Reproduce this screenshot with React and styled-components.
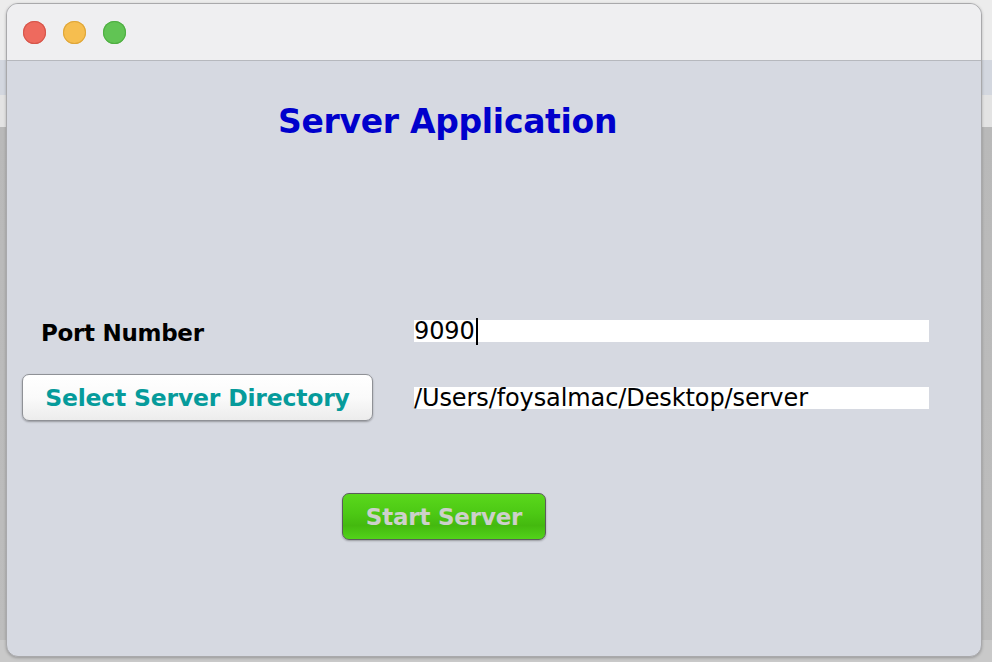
import React from "react";
import styled, { createGlobalStyle } from "styled-components";

const Global = createGlobalStyle`
  html, body { margin: 0; padding: 0; height: 100%; }
  body {
    width: 992px;
    height: 662px;
    overflow: hidden;
    font-family: "DejaVu Sans", "Liberation Sans", sans-serif;
    background: linear-gradient(
      to bottom,
      #ececec 0px, #ececec 60px,
      #d3d7df 60px, #d3d7df 95px,
      #e3e3e3 95px, #e3e3e3 127px,
      #b9b9b9 127px, #bdbdbd 640px,
      #c9c9c9 640px
    );
  }
  #root { height: 100%; }
`;

const Stage = styled.div`
  height: 100%;
  padding: 3px 10px 5px 6px;
  box-sizing: border-box;
  display: flex;
`;

const Window = styled.div`
  flex: 1;
  display: flex;
  flex-direction: column;
  border-radius: 12px;
  overflow: hidden;
  background: #d6d9e1;
  border: 1px solid #a9a9ab;
  box-shadow: 0 1px 3px rgba(0, 0, 0, 0.25);
`;

const TitleBar = styled.div`
  height: 56px;
  flex: none;
  background: #efeff1;
  border-bottom: 1px solid #b6b8bd;
  display: flex;
  align-items: center;
  gap: 17px;
  padding: 0 0 0 16px;
`;

const Light = styled.span`
  width: 23px;
  height: 23px;
  border-radius: 50%;
  background: ${(p) => p.$c};
  box-shadow: inset 0 0 0 1px ${(p) => p.$b};
`;

const Content = styled.div`
  flex: 1;
  display: flex;
  flex-direction: column;
`;

const Title = styled.h1`
  margin: 40px 0 0 271px;
  font-size: 33px;
  font-weight: bold;
  color: #0000cc;
  line-height: 42px;
  letter-spacing: -0.3px;
`;

const Form = styled.div`
  margin-top: 175px;
  display: grid;
  grid-template-columns: 392px 515px;
  row-gap: 30px;
  padding-left: 15px;
  align-items: center;
`;

const Label = styled.div`
  padding-left: 19px;
  font-size: 23px;
  font-weight: bold;
  color: #000;
  letter-spacing: -0.3px;
  position: relative;
  top: 2px;
`;

const Field = styled.div`
  height: 22px;
  background: #fff;
  display: flex;
  align-items: center;
  font-size: 24px;
  color: #000;
  line-height: 22px;
  white-space: nowrap;
  letter-spacing: -0.1px;
`;

const Caret = styled.span`
  display: inline-block;
  width: 2px;
  height: 27px;
  background: #000;
  margin-left: 1px;
`;

const PushButton = styled.button`
  box-sizing: border-box;
  height: 47px;
  width: ${(p) => p.$w}px;
  border-radius: 7px;
  font-family: inherit;
  font-size: ${(p) => (p.$green ? 23 : 23.5)}px;
  font-weight: bold;
  letter-spacing: -0.2px;
  cursor: pointer;
  padding: 0;
  color: ${(p) => (p.$green ? "#cdd0cb" : "#069b9b")};
  border: 1px solid ${(p) => (p.$green ? "#5a5d5a" : "#8f9196")};
  background: ${(p) =>
    p.$green
      ? "linear-gradient(to bottom, #5ad81c 0%, #4cc814 45%, #44b90f 70%, #52d31a 100%)"
      : "linear-gradient(to bottom, #ffffff 0%, #fafafa 50%, #ececec 100%)"};
  box-shadow: 0 1px 2px rgba(0, 0, 0, 0.3);
`;

const Center = styled.div`
  margin-top: 72px;
  padding-left: 335px;
`;

export default function App() {
  return (
    <>
      <Global />
      <Stage>
        <Window>
          <TitleBar>
            <Light $c="#ee6a5e" $b="#d5564b" />
            <Light $c="#f6be4f" $b="#dea63a" />
            <Light $c="#61c454" $b="#4fae43" />
          </TitleBar>
          <Content>
            <Title>Server Application</Title>
            <Form>
              <Label>Port Number</Label>
              <Field>
                9090
                <Caret />
              </Field>
              <PushButton $w={351}>Select Server Directory</PushButton>
              <Field>/Users/foysalmac/Desktop/server</Field>
            </Form>
            <Center>
              <PushButton $green $w={204}>Start Server</PushButton>
            </Center>
          </Content>
        </Window>
      </Stage>
    </>
  );
}
